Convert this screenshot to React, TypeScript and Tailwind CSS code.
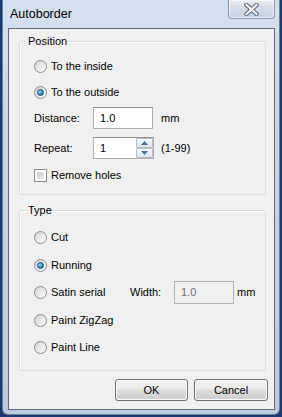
import React from 'react';

const font = { fontFamily: '"Liberation Sans", Arial, sans-serif' };

function Radio({ checked = false }: { checked?: boolean }) {
  return (
    <span className="w-[13px] h-[13px] shrink-0 rounded-full border border-[#8b8b8b] bg-[linear-gradient(135deg,#cfcfcf,#f4f4f4_70%,#ffffff)] flex items-center justify-center">
      {checked ? (
        <span className="w-[7px] h-[7px] rounded-full border border-[#1b4f75] bg-[radial-gradient(circle_at_35%_35%,#9fe0ff,#2a8ccc_55%,#0d4f7e)]" />
      ) : (
        <span className="w-[9px] h-[9px] rounded-full bg-[linear-gradient(135deg,#dadada,#f7f7f7)]" />
      )}
    </span>
  );
}

function RadioRow({ label, checked }: { label: string; checked?: boolean }) {
  return (
    <div className="flex items-center gap-[4px] h-[20px]">
      <Radio checked={checked} />
      <span>{label}</span>
    </div>
  );
}

function Group({ title, className, children }: { title: string; className: string; children: React.ReactNode }) {
  return (
    <div className={`relative border border-[#d5dfe5] rounded-[3px] shadow-[inset_1px_1px_0_#ffffff] ${className}`}>
      <span className="absolute left-[7px] -top-[8px] bg-[#f0f0f0] px-[1px] leading-[14px]">{title}</span>
      {children}
    </div>
  );
}

function Arrow({ up }: { up?: boolean }) {
  return (
    <svg width="7" height="4" viewBox="0 0 7 4">
      <path d={up ? 'M0 4 L3.5 0 L7 4 Z' : 'M0 0 L3.5 4 L7 0 Z'} fill="#4a6c95" />
    </svg>
  );
}

export default function App() {
  return (
    <div className="w-[282px] h-[417px] bg-[#1b3a72] overflow-hidden text-[11px] text-black" style={font}>
      {/* Window frame */}
      <div className="ml-[2px] w-[278px] h-[415px] rounded-b-[6px] border-x border-b border-[#6f7f92] bg-[linear-gradient(180deg,#d5e1ee,#c8d6e6_30%,#bccbdd)] pl-[5px] pr-[4px] flex flex-col">
        <div className="h-[28px] flex items-start justify-between">
          <span className="ml-[2px] mt-[6px] text-[12.5px] leading-[16px]">Autoborder</span>
          <div className="w-[47px] h-[19px] rounded-b-[4px] border border-t-0 border-[#8695a8] bg-[linear-gradient(180deg,#e9eef5,#d3dce8_50%,#c5d1e0)] shadow-[inset_0_0_0_1px_rgba(255,255,255,0.6)] flex items-center justify-center">
            <svg width="15" height="13" viewBox="0 0 15 13">
              <path d="M2.5 2 L12.5 11 M12.5 2 L2.5 11" stroke="#6e7886" strokeWidth="4.4" strokeLinecap="square" />
              <path d="M2.5 2 L12.5 11 M12.5 2 L2.5 11" stroke="#f4f6f9" strokeWidth="2" strokeLinecap="square" />
            </svg>
          </div>
        </div>

        {/* Client area */}
        <div className="w-[267px] h-[382px] border border-[#5f6b78] bg-[#f0f0f0] flex flex-col">
          <Group title="Position" className="mt-[12px] ml-[10px] w-[247px] h-[154px] pl-[14px]">
            <div className="mt-[14px]">
              <RadioRow label="To the inside" />
            </div>
            <div className="mt-[6px]">
              <RadioRow label="To the outside" checked />
            </div>
            <div className="mt-[5px] flex items-center h-[22px]">
              <span className="w-[59px]">Distance:</span>
              <div className="w-[60px] h-[22px] border border-[#abadb3] border-t-[#8c8f94] bg-white pl-[6px] flex items-center">1.0</div>
              <span className="ml-[8px]">mm</span>
            </div>
            <div className="mt-[8px] flex items-center h-[22px]">
              <span className="w-[59px]">Repeat:</span>
              <div className="w-[61px] h-[22px] border border-[#abadb3] border-t-[#8c8f94] bg-white pl-[6px] flex items-center justify-between">
                <span>1</span>
                <div className="w-[17px] h-[20px] flex flex-col">
                  <div className="h-[10px] border border-[#b3bdc9] rounded-[1px] bg-[linear-gradient(180deg,#f7f9fb,#dde4ec)] flex items-center justify-center">
                    <Arrow up />
                  </div>
                  <div className="h-[10px] border border-[#b3bdc9] rounded-[1px] bg-[linear-gradient(180deg,#f7f9fb,#dde4ec)] flex items-center justify-center">
                    <Arrow />
                  </div>
                </div>
              </div>
              <span className="ml-[7px]">(1-99)</span>
            </div>
            <div className="mt-[6px] flex items-center gap-[4px] h-[20px]">
              <span className="w-[13px] h-[13px] border border-[#8b8b8b] bg-white p-[2px]">
                <span className="block w-full h-full bg-[linear-gradient(135deg,#c9c9c9,#efefef)]" />
              </span>
              <span>Remove holes</span>
            </div>
          </Group>

          <Group title="Type" className="mt-[15px] ml-[10px] w-[247px] h-[161px] pl-[14px]">
            <div className="mt-[16px]">
              <RadioRow label="Cut" />
            </div>
            <div className="mt-[8px]">
              <RadioRow label="Running" checked />
            </div>
            <div className="mt-[6px] flex items-center h-[22px]">
              <div className="w-[96px]">
                <RadioRow label="Satin serial" />
              </div>
              <span className="w-[44px]">Width:</span>
              <div className="w-[60px] h-[23px] border border-[#adb2b5] bg-[#f0f0f0] text-[#6d6d6d] pl-[6px] flex items-center">1.0</div>
              <span className="ml-[3px]">mm</span>
            </div>
            <div className="mt-[7px]">
              <RadioRow label="Paint ZigZag" />
            </div>
            <div className="mt-[7px]">
              <RadioRow label="Paint Line" />
            </div>
          </Group>

          <div className="mt-[8px] mr-[6px] flex justify-end gap-[6px]">
            <button className="w-[73px] h-[22px] rounded-[3px] border border-[#707070] bg-[linear-gradient(180deg,#f2f2f2,#ebebeb_45%,#dddddd_50%,#cfcfcf)] shadow-[inset_0_0_0_1px_#fcfcfc]">
              OK
            </button>
            <button className="w-[74px] h-[22px] rounded-[3px] border border-[#707070] bg-[linear-gradient(180deg,#f2f2f2,#ebebeb_45%,#dddddd_50%,#cfcfcf)] shadow-[inset_0_0_0_1px_#fcfcfc]">
              Cancel
            </button>
          </div>
        </div>
      </div>
    </div>
  );
}
